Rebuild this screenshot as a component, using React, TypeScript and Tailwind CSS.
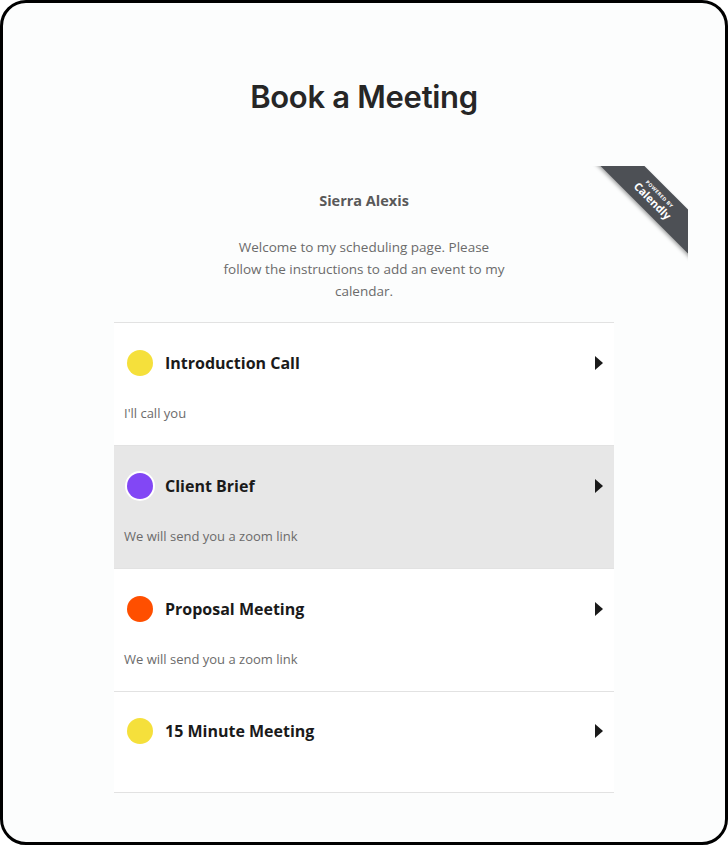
import React from "react";

type EventType = {
  title: string;
  color: string;
  note?: string;
  active?: boolean;
};

const events: EventType[] = [
  { title: "Introduction Call", color: "bg-[#f5e03b]", note: "I'll call you" },
  { title: "Client Brief", color: "bg-[#8247f5]", note: "We will send you a zoom link", active: true },
  { title: "Proposal Meeting", color: "bg-[#ff4f00]", note: "We will send you a zoom link" },
  { title: "15 Minute Meeting", color: "bg-[#f5e03b]" },
];

function Arrow() {
  return (
    <svg width="8" height="14" viewBox="0 0 8 14" className="shrink-0">
      <path d="M0 0 L8 7 L0 14 Z" fill="#1a1a1a" />
    </svg>
  );
}

function EventRow({ ev, last }: { ev: EventType; last: boolean }) {
  return (
    <div
      className={`border-b border-[#e2e2e2] ${ev.active ? "bg-[#e7e7e7]" : "bg-white"} ${
        last ? "pt-[26px] pb-[48px]" : "pt-[27px] pb-[22px]"
      }`}
    >
      <div className="flex items-center pl-[13px] pr-[11px] h-[26px]">
        <span
          className={`w-[26px] h-[26px] rounded-full shrink-0 ${ev.color} ${
            ev.active ? "ring-2 ring-white" : ""
          }`}
        />
        <span className="ml-[12px] text-[16px] font-bold text-[#1a1a1a] flex-1">{ev.title}</span>
        <Arrow />
      </div>
      {ev.note && (
        <p className="mt-[27px] pl-[10px] text-[13px] leading-[20px] text-[#6b6b6b]">{ev.note}</p>
      )}
    </div>
  );
}

export default function App() {
  return (
    <div
      className="w-[728px] h-[845px] border-[3px] border-black rounded-[26px] bg-[#fcfdfd] overflow-hidden"
      style={{ fontFamily: "'Open Sans', sans-serif" }}
    >
      {/* Header */}
      <div className="h-[163px] pt-[74px]">
        <h1
          className="text-center text-[31px] leading-[40px] font-semibold text-[#262626] tracking-[-0.3px]"
          style={{ fontFamily: "Inter, sans-serif" }}
        >
          Book a Meeting
        </h1>
      </div>

      {/* Calendly widget */}
      <div className="relative mx-[37px] h-[700px]">
        {/* Powered by ribbon */}
        <div className="absolute top-0 right-0 w-[104px] h-[104px] overflow-hidden">
          <div className="absolute left-[-9px] top-[17px] w-[160px] h-[31px] rotate-45 bg-[#4d5055] shadow-[0_2px_4px_rgba(0,0,0,0.35)] flex flex-col items-center justify-center gap-[1px] text-white">
            <span className="text-[5px] leading-[6px] font-bold tracking-[0.4px]">POWERED BY</span>
            <span className="text-[11px] leading-[12px] font-bold">Calendly</span>
          </div>
        </div>

        <div className="w-[500px] mx-auto pt-[25px]">
          <p className="text-center text-[14.5px] leading-[20px] font-bold text-[#595959]">Sierra Alexis</p>
          <p className="mt-[25px] mx-auto w-[285px] text-center text-[13.5px] leading-[22px] text-[#6b6b6b]">
            Welcome to my scheduling page. Please follow the instructions to add an event to my calendar.
          </p>
          <div className="mt-[20px] border-t border-[#e2e2e2]">
            {events.map((ev, i) => (
              <EventRow key={ev.title} ev={ev} last={i === events.length - 1} />
            ))}
          </div>
        </div>
      </div>
    </div>
  );
}
